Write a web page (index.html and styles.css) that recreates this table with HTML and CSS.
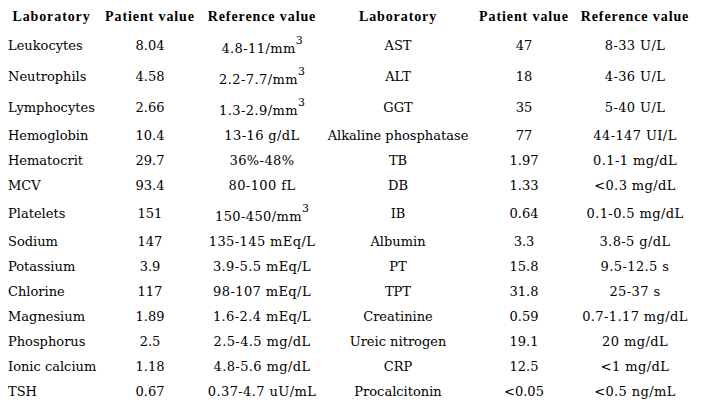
FILE: index.html
```html
<!DOCTYPE html>
<html lang="en">
<head>
<meta charset="utf-8">
<title>Laboratory values</title>
<link rel="stylesheet" href="styles.css">
</head>
<body>
<table class="labs">
  <colgroup>
    <col class="c1"><col class="c2"><col class="c3"><col class="c4"><col class="c5"><col class="c6">
  </colgroup>
  <thead>
    <tr>
      <th>Laboratory</th><th>Patient value</th><th>Reference value</th>
      <th>Laboratory</th><th>Patient value</th><th>Reference value</th>
    </tr>
  </thead>
  <tbody>
    <tr><td>Leukocytes</td><td>8.04</td><td class="ref">4.8-11/mm<sup>3</sup></td><td>AST</td><td>47</td><td class="ref">8-33 U/L</td></tr>
    <tr><td>Neutrophils</td><td>4.58</td><td class="ref">2.2-7.7/mm<sup>3</sup></td><td>ALT</td><td>18</td><td class="ref">4-36 U/L</td></tr>
    <tr><td>Lymphocytes</td><td>2.66</td><td class="ref">1.3-2.9/mm<sup>3</sup></td><td>GGT</td><td>35</td><td class="ref">5-40 U/L</td></tr>
    <tr><td>Hemoglobin</td><td>10.4</td><td class="ref">13-16 g/dL</td><td>Alkaline phosphatase</td><td>77</td><td class="ref">44-147 UI/L</td></tr>
    <tr><td>Hematocrit</td><td>29.7</td><td class="ref">36%-48%</td><td>TB</td><td>1.97</td><td class="ref">0.1-1 mg/dL</td></tr>
    <tr><td>MCV</td><td>93.4</td><td class="ref">80-100 fL</td><td>DB</td><td>1.33</td><td class="ref">&lt;0.3 mg/dL</td></tr>
    <tr><td>Platelets</td><td>151</td><td class="ref">150-450/mm<sup>3</sup></td><td>IB</td><td>0.64</td><td class="ref">0.1-0.5 mg/dL</td></tr>
    <tr><td>Sodium</td><td>147</td><td class="ref">135-145 mEq/L</td><td>Albumin</td><td>3.3</td><td class="ref">3.8-5 g/dL</td></tr>
    <tr><td>Potassium</td><td>3.9</td><td class="ref">3.9-5.5 mEq/L</td><td>PT</td><td>15.8</td><td class="ref">9.5-12.5 s</td></tr>
    <tr><td>Chlorine</td><td>117</td><td class="ref">98-107 mEq/L</td><td>TPT</td><td>31.8</td><td class="ref">25-37 s</td></tr>
    <tr><td>Magnesium</td><td>1.89</td><td class="ref">1.6-2.4 mEq/L</td><td>Creatinine</td><td>0.59</td><td class="ref">0.7-1.17 mg/dL</td></tr>
    <tr><td>Phosphorus</td><td>2.5</td><td class="ref">2.5-4.5 mg/dL</td><td>Ureic nitrogen</td><td>19.1</td><td class="ref">20 mg/dL</td></tr>
    <tr><td>Ionic calcium</td><td>1.18</td><td class="ref">4.8-5.6 mg/dL</td><td>CRP</td><td>12.5</td><td class="ref">&lt;1 mg/dL</td></tr>
    <tr><td>TSH</td><td>0.67</td><td class="ref">0.37-4.7 uU/mL</td><td>Procalcitonin</td><td>&lt;0.05</td><td class="ref">&lt;0.5 ng/mL</td></tr>
  </tbody>
</table>
</body>
</html>
```

FILE: styles.css
```css
html, body {
  margin: 0;
  padding: 0;
  background: #ffffff;
  color: #000000;
}

.labs {
  border-collapse: collapse;
  table-layout: fixed;
  width: 691px;
  margin-top: 5px;
  font-family: "DejaVu Serif", serif;
  font-size: 13px;
}

.c1 { width: 103px; }
.c2 { width: 94px; }
.c3 { width: 130px; }
.c4 { width: 142px; }
.c5 { width: 110px; }
.c6 { width: 112px; }

.labs th {
  font-family: "Liberation Serif", serif;
  font-weight: bold;
  font-size: 14px;
  letter-spacing: 0.9px;
  text-align: center;
  white-space: nowrap;
  padding: 4px 0 5px;
  line-height: 16px;
}

.labs td {
  text-align: center;
  white-space: nowrap;
  padding: 5px 0;
  line-height: 15px;
  vertical-align: middle;
}

.labs td.ref {
  letter-spacing: 0.4px;
}

.labs td:first-child {
  text-align: left;
  padding-left: 8px;
}

.labs sup {
  font-size: 11px;
  line-height: 11px;
  vertical-align: 9px;
  letter-spacing: 0;
}
```
